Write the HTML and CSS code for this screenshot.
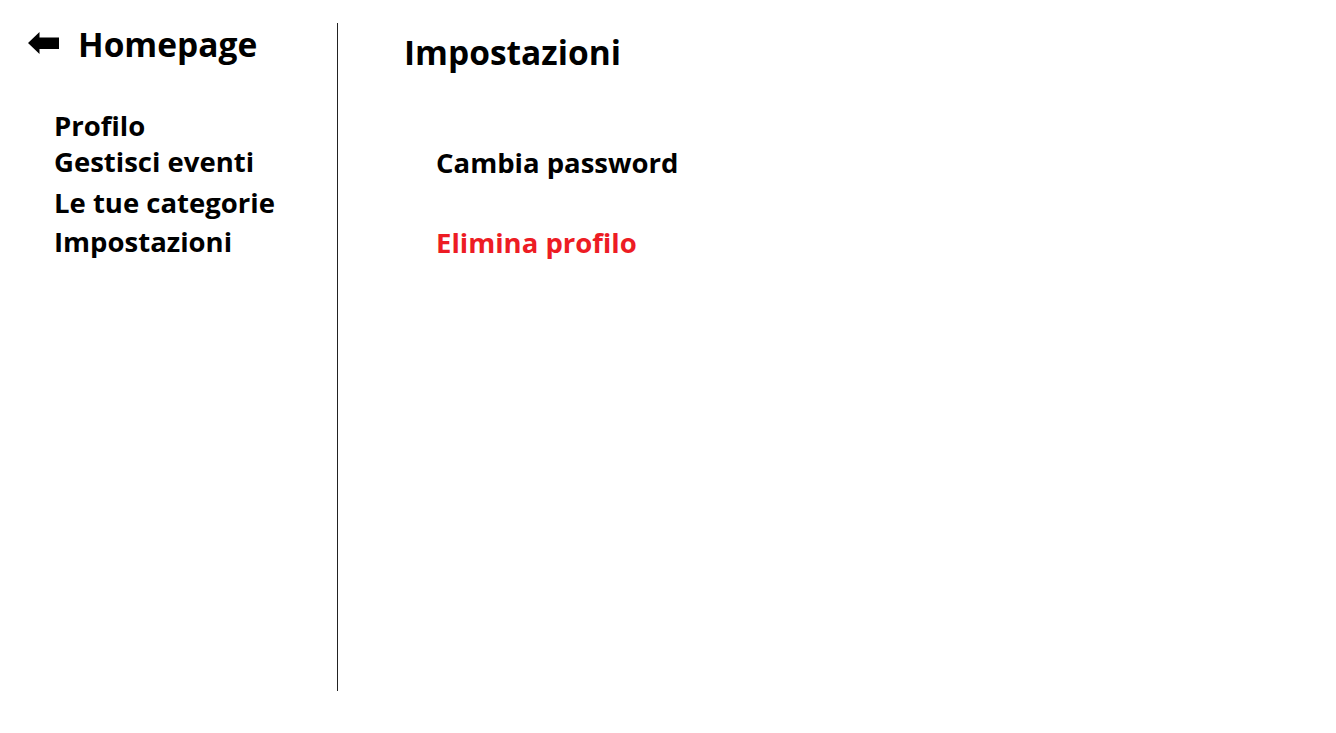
FILE: index.html
```html
<!DOCTYPE html>
<html lang="it">
<head>
<meta charset="utf-8">
<title>Impostazioni</title>
<link rel="stylesheet" href="styles.css">
</head>
<body>
<div class="page">
  <aside class="sidebar">
    <a class="home" href="#">
      <svg class="back" width="31" height="22" viewBox="0 0 31 22"><path d="M0 11 L11.5 0 L11.5 5.5 L31 5.5 L31 17 L11.5 17 L11.5 22 Z" fill="#000"/></svg>
      <span>Homepage</span>
    </a>
    <nav class="menu">
      <a class="m1" href="#">Profilo</a>
      <a class="m2" href="#">Gestisci eventi</a>
      <a class="m3" href="#">Le tue categorie</a>
      <a class="m4" href="#">Impostazioni</a>
    </nav>
  </aside>
  <main class="main">
    <h1 class="title">Impostazioni</h1>
    <div class="options">
      <a class="opt" href="#">Cambia password</a>
      <a class="opt danger" href="#">Elimina profilo</a>
    </div>
  </main>
</div>
</body>
</html>
```

FILE: styles.css
```css
html, body {
  margin: 0;
  padding: 0;
  background: #fff;
}
body {
  font-family: "Open Sans", "Noto Sans", sans-serif;
  font-weight: 700;
  color: #000;
}
a {
  color: inherit;
  text-decoration: none;
}
.page {
  display: flex;
  padding-top: 23px;
}
.sidebar {
  width: 338px;
  height: 668px;
  border-right: 1px solid #222;
  box-sizing: border-box;
  flex-shrink: 0;
}
.home {
  display: flex;
  align-items: flex-start;
  margin-top: 3px;
  padding-left: 28px;
  gap: 19px;
  font-size: 33.5px;
  line-height: 36px;
}
.back {
  display: block;
  flex-shrink: 0;
  margin-top: 6px;
}
.menu {
  display: flex;
  flex-direction: column;
  padding-left: 54px;
  margin-top: 46px;
  font-size: 27.5px;
}
.menu a {
  line-height: 36px;
}
.menu .m3 {
  margin-top: 5px;
}
.menu .m4 {
  margin-top: 3px;
}
.main {
  padding-left: 66px;
}
.title {
  margin: 10px 0 0;
  font-size: 33.5px;
  line-height: 38px;
  font-weight: 700;
}
.options {
  display: flex;
  flex-direction: column;
  padding-left: 32px;
  margin-top: 74px;
  gap: 44px;
  font-size: 27.5px;
}
.opt {
  line-height: 36px;
}
.danger {
  color: #ed1c24;
}
```
